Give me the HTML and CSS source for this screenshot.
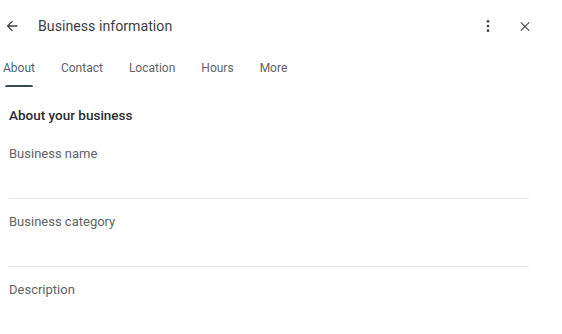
FILE: index.html
```html
<!DOCTYPE html>
<html>
<head>
<meta charset="utf-8">
<link rel="stylesheet" href="styles.css">
</head>
<body>
<div class="page">
  <header class="topbar">
    <button class="icon-btn back" aria-label="Back">
      <svg width="16" height="16" viewBox="0 0 24 24"><path d="M20 11H7.83l5.59-5.59L12 4l-8 8 8 8 1.41-1.41L7.83 13H20v-2z" fill="#3c4043"/></svg>
    </button>
    <h1 class="title">Business information</h1>
    <div class="actions">
      <button class="icon-btn kebab" aria-label="More options">
        <svg width="16" height="16" viewBox="0 0 24 24"><circle cx="12" cy="5" r="2" fill="#3c4043"/><circle cx="12" cy="12" r="2" fill="#3c4043"/><circle cx="12" cy="19" r="2" fill="#3c4043"/></svg>
      </button>
      <button class="icon-btn close" aria-label="Close">
        <svg width="17" height="17" viewBox="0 0 24 24"><path d="M18.8 6.3l-1.1-1.1L12 10.9 6.3 5.2 5.2 6.3 10.9 12l-5.7 5.7 1.1 1.1 5.7-5.7 5.7 5.7 1.1-1.1-5.7-5.7z" fill="#3c4043"/></svg>
      </button>
    </div>
  </header>
  <nav class="tabs">
    <a class="tab active">About</a>
    <a class="tab">Contact</a>
    <a class="tab">Location</a>
    <a class="tab">Hours</a>
    <a class="tab">More</a>
  </nav>
  <section class="content">
    <h2 class="section-title">About your business</h2>
    <div class="field">Business name</div>
    <div class="field">Business category</div>
    <div class="field last">Description</div>
  </section>
</div>
</body>
</html>
```

FILE: styles.css
```css
* { box-sizing: border-box; }
html, body { margin: 0; padding: 0; background: #fff; }
body {
  font-family: Roboto, "Noto Sans", sans-serif;
  color: #3c4043;
  width: 562px;
  height: 334px;
  overflow: hidden;
}
.page { display: flex; flex-direction: column; }
.topbar {
  display: flex;
  align-items: center;
  height: 52px;
  padding: 0 29px 0 4px;
}
.icon-btn {
  border: 0;
  background: none;
  padding: 0;
  width: 16px;
  height: 16px;
  display: flex;
  align-items: center;
  justify-content: center;
  cursor: pointer;
}
.title {
  margin: 0 0 0 18px;
  font-size: 14.2px;
  font-weight: 400;
  color: #3c4043;
  flex: 1;
}
.actions { display: flex; align-items: center; gap: 21px; }
.tabs {
  display: flex;
  gap: 26px;
  padding: 0 0 0 3px;
  height: 36px;
}
.tab {
  font-size: 12px;
  color: #5f6368;
  padding-top: 9px;
  position: relative;
  height: 36px;
}
.tab.active { color: #4a6478; }
.tab.active::after {
  content: "";
  position: absolute;
  left: 2px;
  right: 2px;
  bottom: 1px;
  height: 2px;
  border-radius: 2px 2px 0 0;
  background: #3c4a55;
}
.content { padding: 19px 33px 0 9px; }
.section-title {
  margin: 0;
  font-size: 13.5px;
  font-weight: 500;
  color: #2a2c2f;
  height: 24px;
  line-height: 16px;
}
.field {
  font-size: 13px;
  color: #5f6368;
  padding-top: 15px;
  height: 68px;
  border-bottom: 1px solid #e6e6e6;
}
.field.last { border-bottom-color: #f3f3f3; }
```
